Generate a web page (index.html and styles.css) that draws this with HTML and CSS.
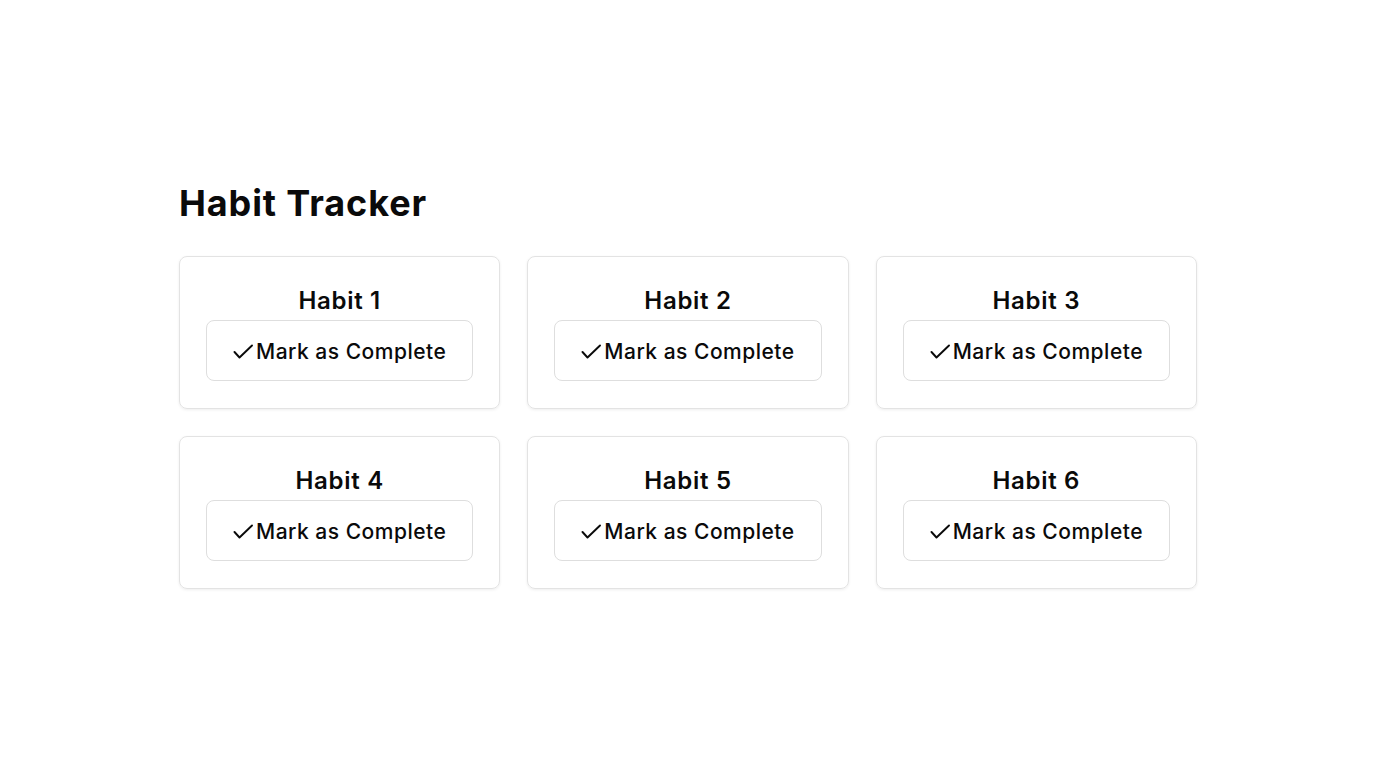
FILE: index.html
```html
<!DOCTYPE html>
<html lang="en">
<head>
<meta charset="utf-8">
<title>Habit Tracker</title>
<link rel="stylesheet" href="styles.css">
</head>
<body>
<main class="page">
  <div class="wrap">
    <h1 class="title">Habit Tracker</h1>
    <div class="grid">
      <div class="card"><h2 class="habit">Habit 1</h2><button class="btn"><svg class="check" viewBox="0 0 20 16"><path d="M1.5 8l5 5.5L19 1.5"/></svg>Mark as Complete</button></div>
      <div class="card"><h2 class="habit">Habit 2</h2><button class="btn"><svg class="check" viewBox="0 0 20 16"><path d="M1.5 8l5 5.5L19 1.5"/></svg>Mark as Complete</button></div>
      <div class="card"><h2 class="habit">Habit 3</h2><button class="btn"><svg class="check" viewBox="0 0 20 16"><path d="M1.5 8l5 5.5L19 1.5"/></svg>Mark as Complete</button></div>
      <div class="card"><h2 class="habit">Habit 4</h2><button class="btn"><svg class="check" viewBox="0 0 20 16"><path d="M1.5 8l5 5.5L19 1.5"/></svg>Mark as Complete</button></div>
      <div class="card"><h2 class="habit">Habit 5</h2><button class="btn"><svg class="check" viewBox="0 0 20 16"><path d="M1.5 8l5 5.5L19 1.5"/></svg>Mark as Complete</button></div>
      <div class="card"><h2 class="habit">Habit 6</h2><button class="btn"><svg class="check" viewBox="0 0 20 16"><path d="M1.5 8l5 5.5L19 1.5"/></svg>Mark as Complete</button></div>
    </div>
  </div>
</main>
</body>
</html>
```
FILE: styles.css
```css
* { box-sizing: border-box; }
html, body { margin: 0; padding: 0; background: #fff; }
body {
  font-family: Inter, "Noto Sans", sans-serif;
  color: #0a0a0a;
}
.page {
  min-height: 100vh;
  padding-top: 2px;
  display: flex;
  flex-direction: column;
  justify-content: center;
  align-items: center;
}
.wrap {
  width: 1018px;
}
.title {
  margin: 0 0 31px;
  font-size: 36px;
  line-height: 44px;
  font-weight: 700;
  letter-spacing: 0.9px;
}
.grid {
  display: grid;
  grid-template-columns: repeat(3, 1fr);
  column-gap: 27px;
  row-gap: 27px;
}
.card {
  border: 1px solid #e3e3e3;
  border-radius: 8px;
  box-shadow: 0 1px 3px rgba(0,0,0,0.07);
  padding: 27px 26px 27px;
  display: flex;
  flex-direction: column;
  align-items: stretch;
}
.habit {
  margin: 0 0 2px;
  text-align: center;
  font-size: 24px;
  line-height: 34px;
  font-weight: 600;
  letter-spacing: 0.7px;
}
.btn {
  height: 61px;
  display: flex;
  align-items: center;
  justify-content: center;
  gap: 3px;
  background: #fff;
  border: 1.5px solid #dedede;
  border-radius: 8px;
  font-family: inherit;
  font-size: 21px;
  font-weight: 500;
  letter-spacing: 0.5px;
  color: #0a0a0a;
  padding: 2px 16px 0;
}
.check {
  width: 20px;
  height: 16px;
  fill: none;
  stroke: #0a0a0a;
  stroke-width: 1.9;
  stroke-linecap: round;
  stroke-linejoin: round;
}
```
